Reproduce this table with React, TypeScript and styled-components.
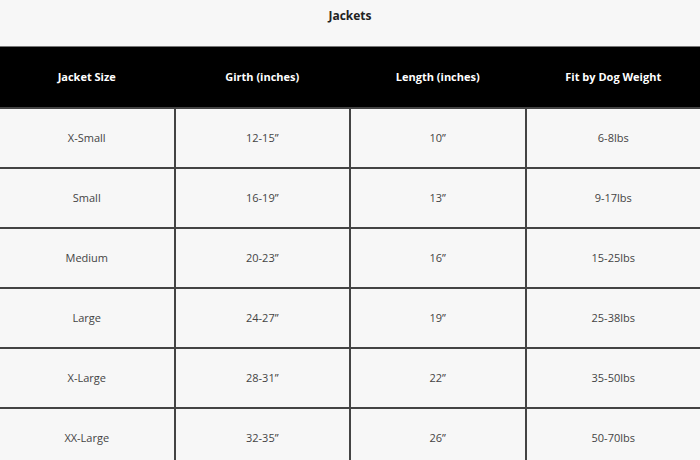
import styled, { createGlobalStyle } from 'styled-components';

const GlobalStyle = createGlobalStyle`
  html, body {
    margin: 0;
    padding: 0;
    background: #f7f7f7;
  }
  body {
    font-family: 'Open Sans', 'Noto Sans', sans-serif;
  }
`;

const Page = styled.div`
  width: 700px;
  height: 460px;
  overflow: hidden;
  background: #f7f7f7;
`;

const Title = styled.h3`
  margin: 0;
  height: 46px;
  padding-top: 8px;
  box-sizing: border-box;
  text-align: center;
  font-size: 12px;
  font-weight: 700;
  line-height: 16px;
  color: #222;
`;

const Table = styled.table`
  width: 704px;
  margin-left: -2px;
  border-collapse: collapse;
  table-layout: fixed;
`;

const HeadRow = styled.tr`
  height: 61px;
  background: #000;
  border-top: 1px solid #777;
`;

const HeadCell = styled.th`
  padding: 0;
  color: #fff;
  font-size: 11px;
  font-weight: 700;
  text-align: center;
  vertical-align: middle;
`;

const Row = styled.tr`
  height: 60px;
`;

const Cell = styled.td`
  padding: 0;
  border: 2px solid #444;
  color: #444;
  font-size: 11px;
  text-align: center;
  vertical-align: middle;
`;

const sizes = [
  ['X-Small', '12-15”', '10”', '6-8lbs'],
  ['Small', '16-19”', '13”', '9-17lbs'],
  ['Medium', '20-23”', '16”', '15-25lbs'],
  ['Large', '24-27”', '19”', '25-38lbs'],
  ['X-Large', '28-31”', '22”', '35-50lbs'],
  ['XX-Large', '32-35”', '26”', '50-70lbs'],
];

export default function App() {
  return (
    <Page>
      <GlobalStyle />
      <Title>Jackets</Title>
      <Table>
        <thead>
          <HeadRow>
            <HeadCell>Jacket Size</HeadCell>
            <HeadCell>Girth (inches)</HeadCell>
            <HeadCell>Length (inches)</HeadCell>
            <HeadCell>Fit by Dog Weight</HeadCell>
          </HeadRow>
        </thead>
        <tbody>
          {sizes.map((row) => (
            <Row key={row[0]}>
              {row.map((value, i) => (
                <Cell key={i}>{value}</Cell>
              ))}
            </Row>
          ))}
        </tbody>
      </Table>
    </Page>
  );
}
